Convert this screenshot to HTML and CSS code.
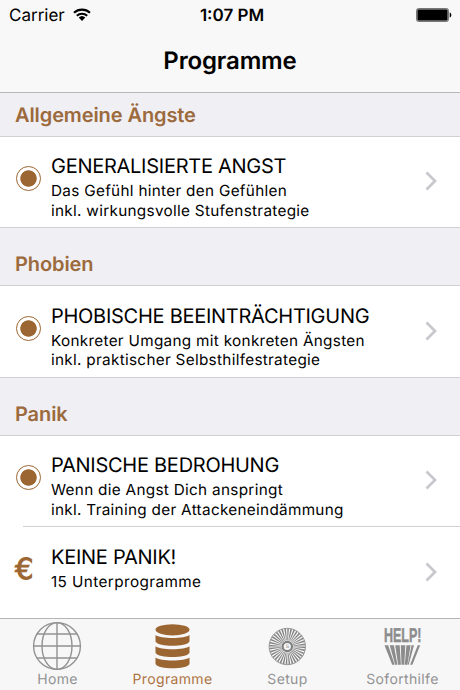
FILE: index.html
```html
<!DOCTYPE html>
<html lang="de">
<head>
    <meta charset="UTF-8">
    <meta name="viewport" content="width=device-width, initial-scale=1.0">
    <title>Programme</title>
    <link rel="stylesheet" href="styles.css">
</head>
<body>
    <header class="top">
        <div class="status-bar">
            <div class="carrier">
                <span>Carrier</span>
                <svg width="18" height="13" viewBox="0 0 18 13">
                    <path d="M1 4.8a11.6 11.6 0 0 1 16 0M3.8 7.8a7.6 7.6 0 0 1 10.4 0" fill="none" stroke="#000" stroke-width="2.1"/>
                    <path d="M5.7 9.6a4.8 4.8 0 0 1 6.6 0L9 12.9z"/>
                </svg>
            </div>
            <span class="time">1:07 PM</span>
            <svg class="battery" width="36" height="14" viewBox="0 0 36 14">
                <rect x=".5" y=".5" width="32" height="13" rx="2" fill="#bbb" stroke="#777"/>
                <rect x="1.5" y="1.5" width="30" height="11" rx="1"/>
                <path d="M33.7 4.5c2.2.5 2.2 4.5 0 5z"/>
            </svg>
        </div>
        <h1>Programme</h1>
    </header>

    <main>
        <h2 class="first">Allgemeine Ängste</h2>
        <div class="row">
            <span class="dot"></span>
            <div class="text">
                <h3>GENERALISIERTE ANGST</h3>
                <p>Das Gefühl hinter den Gefühlen<br>inkl. wirkungsvolle Stufenstrategie</p>
            </div>
            <svg class="chevron" width="13" height="20" viewBox="0 0 13 20"><path d="M1.5 1.5 10 10l-8.5 8.5"/></svg>
        </div>

        <h2>Phobien</h2>
        <div class="row">
            <span class="dot"></span>
            <div class="text">
                <h3>PHOBISCHE BEEINTRÄCHTIGUNG</h3>
                <p>Konkreter Umgang mit konkreten Ängsten<br>inkl. praktischer Selbsthilfestrategie</p>
            </div>
            <svg class="chevron" width="13" height="20" viewBox="0 0 13 20"><path d="M1.5 1.5 10 10l-8.5 8.5"/></svg>
        </div>

        <h2>Panik</h2>
        <div class="row">
            <span class="dot"></span>
            <div class="text">
                <h3>PANISCHE BEDROHUNG</h3>
                <p>Wenn die Angst Dich anspringt<br>inkl. Training der Attackeneindämmung</p>
            </div>
            <svg class="chevron" width="13" height="20" viewBox="0 0 13 20"><path d="M1.5 1.5 10 10l-8.5 8.5"/></svg>
        </div>
        <div class="row last">
            <span class="euro">€</span>
            <div class="text">
                <h3>KEINE PANIK!</h3>
                <p>15 Unterprogramme</p>
            </div>
            <svg class="chevron" width="13" height="20" viewBox="0 0 13 20"><path d="M1.5 1.5 10 10l-8.5 8.5"/></svg>
        </div>
    </main>

    <nav class="tabs">
        <div class="tab">
            <svg width="50" height="50" viewBox="0 0 50 50" fill="none" stroke="#929292" stroke-width="1.4">
                <circle cx="24" cy="25" r="23.4"/>
                <ellipse cx="24" cy="25" rx="15" ry="23.4"/>
                <path d="M24 1.6v46.8M.6 25h46.8M4 13h40M4 37h40"/>
            </svg>
            <span>Home</span>
        </div>
        <div class="tab active">
            <svg width="50" height="50" viewBox="0 0 50 50" fill="#9c6632">
                <ellipse cx="24.5" cy="8.8" rx="17" ry="5.6"/>
                <path id="disk" d="M7.5 14c4.5 4 29.500 4 34 0v6.500c-3 5.800-31 5.800-34 0z"/>
                <use href="#disk" y="11.2"/>
                <use href="#disk" y="22.4"/>
            </svg>
            <span>Programme</span>
        </div>
        <div class="tab">
            <svg width="50" height="50" viewBox="0 0 50 50" fill="none" stroke="#858585">
                <circle cx="24.3" cy="25.5" r="18.2" stroke-width=".8"/>
                <circle cx="24.3" cy="25.5" r="12" stroke-width="12" pathLength="72" stroke-dasharray="1.1 .9"/>
                <circle cx="24.3" cy="25.5" r="4.7" fill="#f7f7f8" stroke="#808080" stroke-width="2.2"/>
                <text x="24.3" y="27.3" class="coin">S</text>
            </svg>
            <span>Setup</span>
        </div>
        <div class="tab">
            <svg width="50" height="50" viewBox="0 0 50 50" fill="#8c8c8c">
                <text x="6" y="21.300" class="help" textLength="37.500" lengthAdjust="spacingAndGlyphs">HELP!</text>
                <path d="M6.5 24.3h3.7l6.5 19.4h-2.500zM11.7 24.3h4.2l3.5 19.4h-2.200zM17.2 24.3h4.500l1.200 19.4h-2.800zM22.8 24.3h4.500l-1 19.4h-2.800zM28.4 24.3h4.200l-3.200 19.4h-2.600zM33.5 24.3h2.500l-5.300 19.4h-1zM39.7 24.3h2.500l-7.800 19.4h-2.300z"/>
            </svg>
            <span>Soforthilfe</span>
        </div>
    </nav>
</body>
</html>
```

FILE: styles.css
```css
* {
    box-sizing: border-box;
}
body {
    margin: 0;
    height: 690px;
    display: flex;
    flex-direction: column;
    overflow: hidden;
    background: #fff;
    color: #000;
    font-family: Inter, sans-serif;
    text-rendering: geometricPrecision;
}
h1, h2, h3, p {
    margin: 0;
}
.top {
    height: 93px;
    background: #f8f8f8;
    border-bottom: 1px solid #b7b7ba;
}
.status-bar {
    height: 30px;
    padding: 0 8px 0 9px;
    display: grid;
    grid-template-columns: 1fr auto 1fr;
    align-items: center;
    font-size: 17px;
}
.carrier {
    display: flex;
    align-items: center;
    gap: 8px;
}
.carrier span {
    padding-top: 1px;
}
.carrier svg {
    margin-bottom: 2px;
}
.time {
    padding: 2px 0 0 3px;
    font-weight: 600;
    font-size: 17px;
}
.battery {
    justify-self: end;
}
h1 {
    text-align: center;
    font-size: 24px;
    font-weight: 600;
    line-height: 62px;
    letter-spacing: -0.15px;
}
h2 {
    height: 59px;
    padding: 15px 15px 0;
    background: #efeff4;
    border-top: 1px solid #d0d0d4;
    border-bottom: 1px solid #d0d0d4;
    color: #9c6a3c;
    font-size: 20px;
    font-weight: 600;
    line-height: 42px;
    letter-spacing: -0.1px;
}
h2.first {
    height: 43.5px;
    padding-top: 1px;
    border-top: 0;
}
.row {
    height: 90.5px;
    display: flex;
    align-items: flex-start;
    padding: 0 22px 0 16px;
}
.dot {
    width: 25px;
    height: 25px;
    margin-top: 29.5px;
    border: 1px solid #9c6632;
    border-radius: 50%;
    background: radial-gradient(circle, #9c6632 7.8px, #fff 8.6px);
}
.text {
    flex: 1;
    margin-left: 10px;
    padding-top: 16.5px;
    white-space: nowrap;
}
h3 {
    font-size: 20px;
    font-weight: 400;
    line-height: 26px;
    letter-spacing: -0.27px;
}
p {
    padding-top: 2px;
    font-size: 15.3px;
    line-height: 19.5px;
    letter-spacing: 0.3px;
}
.chevron {
    margin-top: 34.5px;
    fill: none;
    stroke: #c7c7cc;
    stroke-width: 2.7;
}
.last {
    height: 92px;
    margin-left: 23px;
    padding-left: 0;
    border-top: 1px solid #d0d0d4;
}
.last p {
    letter-spacing: 0.4px;
}
.euro {
    width: 25px;
    margin-left: -8px;
    margin-right: 1px;
    color: #9c6632;
    font-family: "DejaVu Sans", sans-serif;
    font-size: 29px;
    line-height: 85px;
    -webkit-text-stroke: 1px #9c6632;
}
.tabs {
    height: 72px;
    margin-top: auto;
    display: grid;
    grid-template-columns: repeat(4, 115px);
    background: #f7f7f8;
    border-top: 1px solid #b5b5b7;
}
.tab {
    display: flex;
    flex-direction: column;
    align-items: center;
    padding-top: 2px;
    color: #929292;
    font-size: 14px;
    line-height: 17px;
    letter-spacing: 0.35px;
}
.tab svg {
    overflow: visible;
}
.active {
    color: #ad7442;
}
.help {
    font: bold 20px "Liberation Sans", sans-serif;
    stroke: #8c8c8c;
    stroke-width: 0.5px;
    letter-spacing: 0;
}
.coin {
    font: 5px "Liberation Sans", sans-serif;
    fill: #8c8c8c;
    stroke: none;
    text-anchor: middle;
    letter-spacing: 0;
}
```
